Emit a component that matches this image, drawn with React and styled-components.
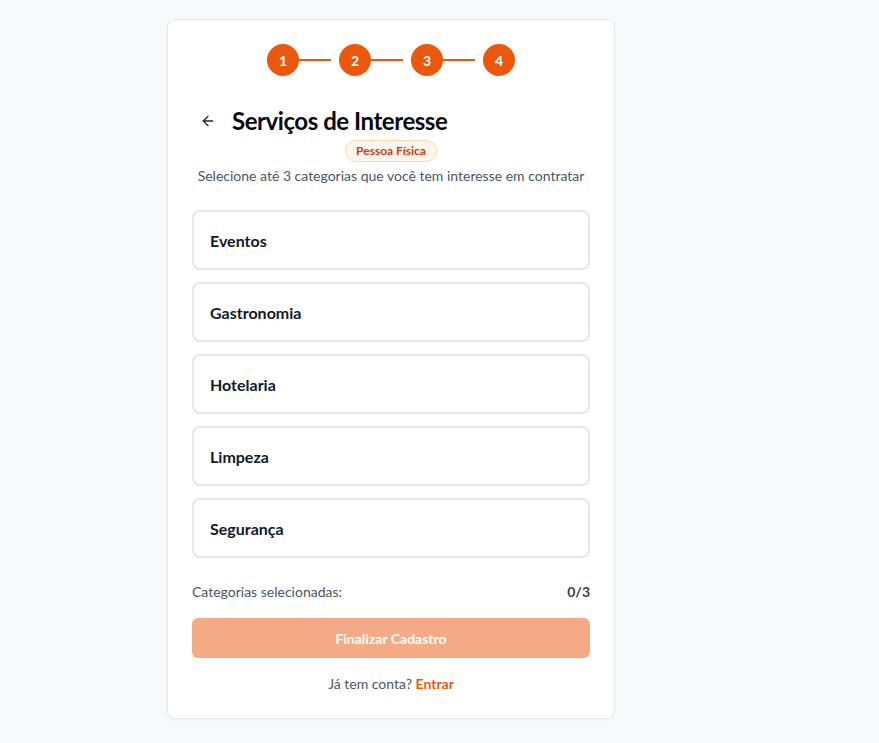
import React from "react";
import styled, { createGlobalStyle } from "styled-components";

const GlobalStyle = createGlobalStyle`
  html, body { margin: 0; padding: 0; }
  body {
    background: #f8f9fb;
    font-family: Lato, "Liberation Sans", sans-serif;
    color: #111827;
  }
  * { box-sizing: border-box; }
`;

const Page = styled.div`
  min-height: 743px;
  padding: 19px 0 0 167px;
`;

const Card = styled.div`
  width: 448px;
  background: #ffffff;
  border: 1px solid #e5e7eb;
  border-radius: 8px;
  padding: 24px;
  box-shadow: 0 1px 2px rgba(0, 0, 0, 0.03);
`;

const Steps = styled.div`
  display: flex;
  justify-content: center;
  align-items: center;
  gap: 8px;
  margin-bottom: 29px;
`;

const Step = styled.div`
  display: flex;
  align-items: center;
`;

const StepCircle = styled.div`
  width: 32px;
  height: 32px;
  border-radius: 50%;
  background: #ea580c;
  color: #fff;
  font-weight: 700;
  font-size: 14px;
  display: flex;
  align-items: center;
  justify-content: center;
`;

const StepLine = styled.div`
  width: 32px;
  height: 2px;
  background: #ea580c;
`;

const HeaderRow = styled.div`
  display: flex;
  align-items: center;
  gap: 8px;
  height: 32px;
`;

const BackButton = styled.button`
  width: 32px;
  height: 32px;
  border: none;
  background: transparent;
  padding: 0;
  display: flex;
  align-items: center;
  justify-content: center;
  color: #1f2937;
  cursor: pointer;
`;

const Title = styled.h1`
  margin: 0;
  font-size: 24px;
  line-height: 32px;
  font-weight: 700;
  letter-spacing: -0.45px;
  color: #0b0b0f;
`;

const BadgeRow = styled.div`
  display: flex;
  justify-content: center;
  margin-top: 3px;
`;

const Badge = styled.span`
  display: inline-block;
  padding: 2px 10px;
  border: 1px solid #fed7aa;
  background: #fff7ed;
  color: #c2410c;
  border-radius: 999px;
  font-size: 12px;
  line-height: 16px;
  font-weight: 700;
`;

const Subtitle = styled.p`
  margin: 4px 0 0;
  text-align: center;
  font-size: 14px;
  line-height: 20px;
  color: #4b5563;
`;

const Options = styled.div`
  display: flex;
  flex-direction: column;
  gap: 12px;
  margin-top: 24px;
`;

const Option = styled.button`
  display: flex;
  align-items: center;
  width: 100%;
  height: 60px;
  padding: 0 16px;
  border: 2px solid #e5e7eb;
  border-radius: 8px;
  background: #fff;
  font-family: inherit;
  font-size: 16px;
  font-weight: 700;
  color: #111827;
  text-align: left;
  cursor: pointer;
`;

const CounterRow = styled.div`
  display: flex;
  justify-content: space-between;
  align-items: center;
  margin-top: 24px;
  font-size: 14px;
  line-height: 20px;
  color: #4b5563;
`;

const CounterValue = styled.span`
  font-weight: 700;
  color: #374151;
`;

const SubmitButton = styled.button`
  width: 100%;
  height: 40px;
  margin-top: 16px;
  border: none;
  border-radius: 6px;
  background: #ea580c;
  opacity: 0.5;
  color: #fff;
  font-family: inherit;
  font-size: 14px;
  font-weight: 700;
  cursor: not-allowed;
`;

const Footer = styled.p`
  margin: 16px 0 0;
  text-align: center;
  font-size: 14px;
  line-height: 20px;
  color: #4b5563;
`;

const FooterLink = styled.a`
  color: #ea580c;
  font-weight: 700;
  text-decoration: none;
`;

const categories = ["Eventos", "Gastronomia", "Hotelaria", "Limpeza", "Segurança"];

export default function App() {
  return (
    <>
      <GlobalStyle />
      <Page>
        <Card>
          <Steps>
            {[1, 2, 3, 4].map((n) => (
              <Step key={n}>
                <StepCircle>{n}</StepCircle>
                {n < 4 && <StepLine />}
              </Step>
            ))}
          </Steps>
          <HeaderRow>
            <BackButton aria-label="Voltar">
              <svg width="16" height="16" viewBox="0 0 24 24" fill="none" stroke="currentColor" strokeWidth="2" strokeLinecap="round" strokeLinejoin="round">
                <path d="m12 19-7-7 7-7" />
                <path d="M19 12H5" />
              </svg>
            </BackButton>
            <Title>Serviços de Interesse</Title>
          </HeaderRow>
          <BadgeRow>
            <Badge>Pessoa Física</Badge>
          </BadgeRow>
          <Subtitle>Selecione até 3 categorias que você tem interesse em contratar</Subtitle>
          <Options>
            {categories.map((c) => (
              <Option key={c}>{c}</Option>
            ))}
          </Options>
          <CounterRow>
            <span>Categorias selecionadas:</span>
            <CounterValue>0/3</CounterValue>
          </CounterRow>
          <SubmitButton disabled>Finalizar Cadastro</SubmitButton>
          <Footer>
            Já tem conta? <FooterLink href="#">Entrar</FooterLink>
          </Footer>
        </Card>
      </Page>
    </>
  );
}
